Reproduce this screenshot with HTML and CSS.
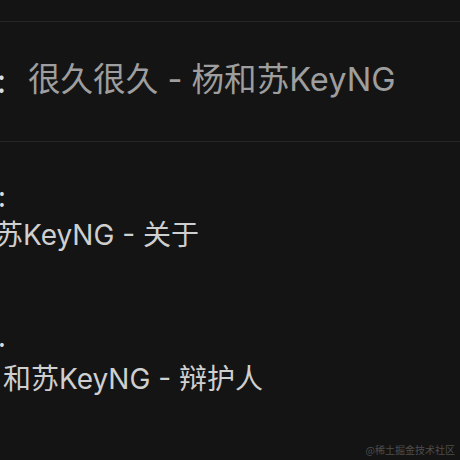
FILE: index.html
```html
<!DOCTYPE html>
<html lang="zh-CN">
<head>
<meta charset="utf-8">
<title>详情</title>
<link rel="stylesheet" href="styles.css">
</head>
<body>
<div class="page">
  <div class="spacer"></div>
  <div class="row row-main">
    <span class="key key-main">:</span>
    <span class="val val-main">很久很久 - 杨和苏KeyNG</span>
  </div>
  <div class="row row-block">
    <div class="key key-a">:</div>
    <div class="val val-a">苏KeyNG - 关于</div>
  </div>
  <div class="row row-block row-b">
    <div class="key key-b">.</div>
    <div class="val val-b">和苏KeyNG - 辩护人</div>
  </div>
</div>
<div class="watermark">@稀土掘金技术社区</div>
</body>
</html>
```
FILE: styles.css
```css
html, body {
  margin: 0;
  padding: 0;
}
body {
  width: 460px;
  height: 460px;
  overflow: hidden;
  background: #141414;
  font-family: "Noto Sans CJK SC", "Noto Sans", sans-serif;
  position: relative;
}
.page {
  white-space: nowrap;
}
.spacer {
  height: 21px;
}
.row-main {
  display: flex;
  border-top: 1px solid #262626;
  border-bottom: 1px solid #262626;
  padding: 37px 0 42px;
  font-size: 32px;
  line-height: 40px;
}
.val {
  font-family: "Inter", "Noto Sans CJK SC", sans-serif;
  color: #cfcfcf;
}
.key {
  color: #dcdcdc;
}
.key-main {
  margin-left: -3px;
}
.val-main {
  margin-left: 22px;
  font-size: 32.6px;
  color: #9e9e9e;
}
.row-block {
  font-size: 28px;
  line-height: 40px;
  padding-top: 33px;
}
.row-b {
  padding-top: 60px;
}
.key-a, .key-b {
  margin-left: -2px;
}
.key-b {
  margin-bottom: 4px;
}
.val-a {
  margin-left: -5px;
}
.val-b {
  margin-left: 3px;
}
.watermark {
  position: absolute;
  right: 5px;
  bottom: 4px;
  font-size: 10px;
  line-height: 12px;
  color: #4d4d4d;
}
```
